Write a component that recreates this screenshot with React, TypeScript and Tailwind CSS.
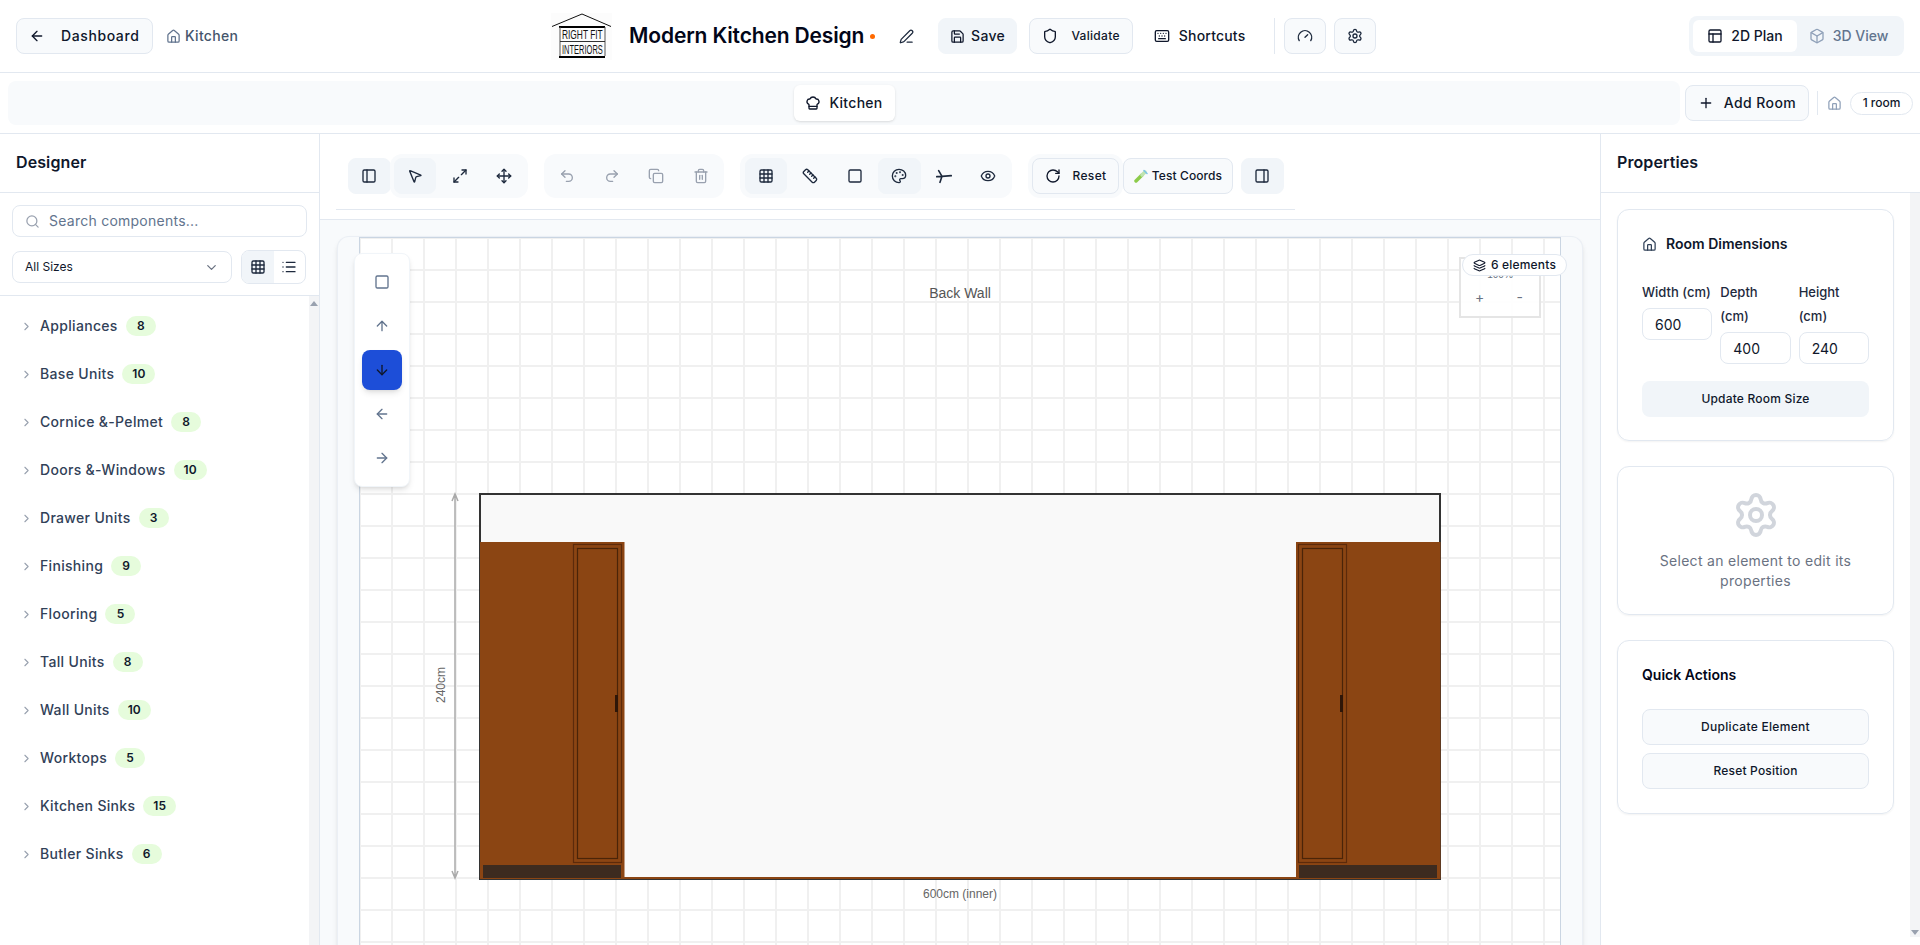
import React from 'react';
import {
  ArrowDown, ArrowLeft, ArrowRight, ArrowUp, Box, ChefHat, ChevronDown, ChevronRight, Copy, Eye, Gauge,
  Grid3x3, House, Keyboard, Layers, List, Maximize2, MousePointer2, Move, PanelLeft, PanelRight, PanelsTopLeft,
  Palette, PenLine, Plus, Redo2, RotateCw, Ruler, Save, Search, Settings, Shield, Square, Trash2, Undo2,
} from 'lucide-react';

const categories = [
  ['Appliances', 8], ['Base Units', 10], ['Cornice &-Pelmet', 8], ['Doors &-Windows', 10], ['Drawer Units', 3],
  ['Finishing', 9], ['Flooring', 5], ['Tall Units', 8], ['Wall Units', 10], ['Worktops', 5], ['Kitchen Sinks', 15], ['Butler Sinks', 6],
];

function Logo() {
  return (
    <svg width="61" height="47" viewBox="0 0 61 47" className="shrink-0">
      <rect width="61" height="47" fill="#fcfcfc" />
      <path d="M1 13.5 31 1 60 13.5" fill="none" stroke="#111" strokeWidth="1" />
      <path d="M8 14h46M8 44h46" stroke="#000" strokeWidth="2" />
      <path d="M9 14v29M54 14v29" stroke="#555" strokeWidth="1" />
      <path d="M9 28.5h45" stroke="#333" strokeWidth="1" />
      <text transform="translate(11 26) scale(0.67 1)" fontFamily="Liberation Sans, sans-serif" fontSize="12.5" fill="#111">RIGHT FIT</text>
      <text transform="translate(11 40.5) scale(0.6 1)" fontFamily="Liberation Sans, sans-serif" fontSize="12.5" fill="#111">INTERIORS</text>
    </svg>
  );
}

function JunctionIcon() {
  return (
    <svg width="16" height="16" viewBox="0 0 24 24" fill="none" stroke="currentColor" strokeWidth="2.4" strokeLinecap="round">
      <path d="M1 13 9 12.5 23 11.5M4 4l5 8.5-3 9" />
    </svg>
  );
}

function TubeIcon() {
  return (
    <svg width="14" height="14" viewBox="0 0 14 14" fill="none" strokeLinecap="round">
      <path d="M2 12 8 6" stroke="#8ccb4a" strokeWidth="3.5" />
      <path d="M8 6l3-3" stroke="#bfe3b0" strokeWidth="3.5" />
      <path d="M10 1.5 13 4.5" stroke="#7cc4e8" strokeWidth="1.5" />
    </svg>
  );
}

function ToolBtn({ active, faded, children }: { active?: boolean; faded?: boolean; children: React.ReactNode }) {
  return (
    <button className={`flex h-[36px] w-[42.5px] items-center justify-center rounded-lg border ${active ? 'border-slate-100 bg-slate-100' : 'border-transparent'} ${faded ? 'text-gray-400' : 'text-slate-800'}`}>
      {children}
    </button>
  );
}

function Gutter({ up, down, className }: { up?: boolean; down?: boolean; className?: string }) {
  return (
    <div className={`flex w-[10px] shrink-0 flex-col justify-between bg-[#f3f4f6] ${className ?? ''}`}>
      <div className="flex h-[10px] items-center justify-center pt-1">
        {up && <div className="h-0 w-0 border-x-[4px] border-b-[5px] border-x-transparent border-b-gray-400" />}
      </div>
      <div className="flex h-[10px] items-center justify-center">
        {down && <div className="h-0 w-0 border-x-[4px] border-t-[5px] border-x-transparent border-t-gray-400" />}
      </div>
    </div>
  );
}

function Header() {
  return (
    <header className="flex h-[73px] shrink-0 items-center justify-between border-b border-slate-200 px-4">
      <div className="flex items-center">
        <button className="flex h-[36px] w-[137px] items-center gap-4 rounded-lg border border-slate-200 bg-slate-50 pl-[12px] text-sm font-medium tracking-[0.6px] text-slate-900">
          <ArrowLeft size={16} />
          Dashboard
        </button>
        <div className="ml-[13px] flex items-center gap-1 text-sm font-medium tracking-[0.3px] text-slate-600">
          <House size={15} className="text-slate-500" />
          Kitchen
        </div>
      </div>

      <div className="flex items-center">
        <Logo />
        <h1 className="ml-[17px] w-[235px] whitespace-nowrap text-[21px] font-semibold tracking-[-0.15px] text-slate-950">Modern Kitchen Design</h1>
        <span className="ml-[6px] h-[5px] w-[5px] rounded-full bg-orange-500" />
        <PenLine size={15} className="ml-[24px] text-slate-800" />
        <button className="ml-[24px] flex h-[36px] w-[79px] items-center justify-center gap-[6px] rounded-lg border border-slate-100 bg-slate-100 text-sm font-medium tracking-[0.3px] text-slate-900">
          <Save size={15} />
          Save
        </button>
        <button className="ml-[12px] flex h-[36px] w-[104px] items-center justify-center gap-[13px] rounded-lg border border-slate-200 bg-slate-50 text-xs font-medium tracking-[0.3px] text-slate-900">
          <Shield size={16} />
          Validate
        </button>
        <button className="ml-[9px] flex h-[36px] w-[115px] items-center justify-center gap-[9px] text-sm font-medium tracking-[0.2px] text-slate-900">
          <Keyboard size={16} />
          Shortcuts
        </button>
        <div className="ml-[17px] h-[36px] w-px bg-slate-200" />
        <button className="ml-[9px] flex h-[36px] w-[42px] items-center justify-center rounded-lg border border-slate-200 bg-slate-50 text-slate-800">
          <Gauge size={16} />
        </button>
        <button className="ml-[8px] flex h-[36px] w-[42px] items-center justify-center rounded-lg border border-slate-200 bg-slate-50 text-slate-800">
          <Settings size={16} />
        </button>
      </div>

      <div className="flex h-[40px] w-[215px] items-center rounded-lg bg-slate-100 p-1">
        <button className="flex h-[32px] w-[104px] items-center justify-center gap-2 rounded-md bg-white text-sm font-medium text-slate-900">
          <PanelsTopLeft size={16} />
          2D Plan
        </button>
        <button className="flex h-[32px] flex-1 items-center justify-center gap-2 text-sm font-medium text-slate-500">
          <Box size={16} className="text-slate-400" />
          3D View
        </button>
      </div>
    </header>
  );
}

function RoomBar() {
  return (
    <div className="flex h-[61px] shrink-0 items-center border-b border-slate-200 pl-2">
      <div className="flex h-[44px] w-[1672px] items-center justify-center rounded-lg bg-slate-50">
        <div className="flex h-[36px] w-[101px] items-center justify-center gap-2 rounded-md bg-white text-sm font-medium tracking-[0.3px] text-slate-900 shadow-sm">
          <ChefHat size={16} />
          Kitchen
        </div>
      </div>
      <button className="ml-[5px] flex h-[36px] w-[124px] items-center justify-center gap-[10px] rounded-lg border border-slate-200 bg-slate-50 text-sm font-medium tracking-[0.4px] text-slate-900">
        <Plus size={16} />
        Add Room
      </button>
      <div className="ml-2 h-[24px] w-px bg-slate-200" />
      <House size={15} className="ml-[9px] text-slate-400" />
      <div className="ml-[8px] flex h-[23px] w-[63px] items-center justify-center rounded-full border border-slate-200 bg-white text-xs font-medium text-slate-900">1 room</div>
    </div>
  );
}

function LeftPanel() {
  return (
    <aside className="flex w-[320px] shrink-0 flex-col border-r border-slate-200">
      <div className="flex h-[59px] shrink-0 items-center border-b border-slate-200 pb-[3px] pl-4 text-base font-semibold tracking-[0.1px] text-slate-900">Designer</div>
      <div className="flex h-[103px] shrink-0 flex-col gap-[13px] border-b border-slate-200 px-3 pt-[12px]">
        <div className="flex h-[32px] items-center gap-[9px] rounded-lg border border-slate-200 pl-3 text-sm tracking-[0.25px] text-slate-500">
          <Search size={15} className="text-gray-400" />
          Search components...
        </div>
        <div className="flex items-center gap-[9px]">
          <div className="flex h-[32px] w-[220px] items-center justify-between rounded-lg border border-slate-200 px-3 text-xs text-slate-900">
            All Sizes
            <ChevronDown size={15} className="text-gray-500" />
          </div>
          <div className="flex h-[34px] w-[65px] overflow-hidden rounded-lg border border-slate-200">
            <div className="flex flex-1 items-center justify-center bg-slate-100 text-slate-800"><Grid3x3 size={16} /></div>
            <div className="flex flex-1 items-center justify-center text-slate-800"><List size={16} /></div>
          </div>
        </div>
      </div>
      <div className="flex min-h-0 flex-1">
        <div className="flex-1 pt-[6px]">
          {categories.map(([name, count]) => (
            <div key={name} className="flex h-[48px] items-center pl-[20px]">
              <ChevronRight size={13} className="text-gray-400" />
              <span className="ml-[7px] whitespace-nowrap text-sm font-medium tracking-[0.32px] text-slate-700">{name}</span>
              <span className="ml-[8px] flex h-[20px] min-w-[30px] items-center justify-center rounded-full bg-[#e6fcdc] px-[10px] text-xs font-semibold text-slate-900">{count}</span>
            </div>
          ))}
        </div>
        <Gutter up />
      </div>
    </aside>
  );
}

function Toolbar() {
  return (
    <div className="h-[86px] shrink-0 border-b border-slate-200 bg-white pl-4 pt-[9px]">
      <div className="flex h-[67px] w-[959px] items-center border-b border-slate-200 pl-3">
        <ToolBtn active><PanelLeft size={16} /></ToolBtn>
        <div className="-ml-[0.5px] flex h-[44px] w-[138px] items-center justify-center gap-[2px] rounded-xl bg-slate-50 pl-[1px]">
          <ToolBtn active><MousePointer2 size={16} /></ToolBtn>
          <ToolBtn><Maximize2 size={16} /></ToolBtn>
          <ToolBtn><Move size={16} /></ToolBtn>
        </div>
        <div className="ml-4 flex h-[44px] w-[180px] items-center justify-center gap-[2px] rounded-xl bg-slate-50">
          <ToolBtn faded><Undo2 size={16} /></ToolBtn>
          <ToolBtn faded><Redo2 size={16} /></ToolBtn>
          <ToolBtn faded><Copy size={16} /></ToolBtn>
          <ToolBtn faded><Trash2 size={16} /></ToolBtn>
        </div>
        <div className="ml-4 flex h-[44px] w-[272px] items-center justify-center gap-[2px] rounded-xl bg-slate-50 pl-[2px]">
          <ToolBtn active><Grid3x3 size={16} /></ToolBtn>
          <ToolBtn><Ruler size={16} /></ToolBtn>
          <ToolBtn><Square size={16} /></ToolBtn>
          <ToolBtn active><Palette size={16} /></ToolBtn>
          <ToolBtn><JunctionIcon /></ToolBtn>
          <ToolBtn><Eye size={16} /></ToolBtn>
        </div>
        <div className="ml-4 flex h-[44px] w-[95px] items-center justify-center rounded-xl bg-slate-50">
          <button className="flex h-[36px] w-[87px] items-center justify-center gap-[12px] rounded-lg border border-slate-200 bg-slate-50 text-xs font-medium tracking-[0.3px] text-slate-900">
            <RotateCw size={16} />
            Reset
          </button>
        </div>
        <button className="flex h-[36px] w-[110px] items-center justify-center gap-1 rounded-lg border border-slate-200 bg-slate-50 text-xs font-medium tracking-[0.1px] text-slate-900">
          <TubeIcon />
          Test Coords
        </button>
        <div className="ml-2"><ToolBtn active><PanelRight size={16} /></ToolBtn></div>
      </div>
    </div>
  );
}

function Cabinet({ mirror }: { mirror?: boolean }) {
  const left = mirror ? 1296 : 480;
  const doorX = mirror ? 1298 : 573;
  const innerX = mirror ? 1302 : 577;
  const handleX = mirror ? 1340 : 615;
  const plinthX = mirror ? 1299 : 483;
  return (
    <g>
      <rect x={left} y="542" width="144.5" height="337" fill="#8b4513" />
      <rect x={doorX + 0.5} y="544.5" width="48" height="318" fill="none" stroke="#5c2a0a" strokeWidth="1.2" />
      <rect x={innerX + 0.5} y="548.5" width="40" height="310" fill="none" stroke="#4a2408" strokeWidth="1.2" />
      <rect x={handleX} y="695" width="3" height="17" fill="#2e1608" />
      <rect x={plinthX} y="865" width="138" height="13" fill="#3d2b1f" />
    </g>
  );
}

function RoomDrawing() {
  return (
    <svg width="1200" height="707" viewBox="360 238 1200 707" className="absolute left-0 top-0">
      <rect x="480" y="494" width="960" height="385" fill="#f9f9f9" stroke="#333" strokeWidth="2" />
      <Cabinet />
      <Cabinet mirror />
      <rect x="624" y="877" width="672" height="2" fill="#8b4513" />
      <path d="M455 494v384M452 501l3-7 3 7M452 871l3 7 3-7" fill="none" stroke="#aaa" strokeWidth="1.5" />
      <text x="445" y="685" transform="rotate(-90 445 685)" textAnchor="middle" fontFamily="Liberation Sans, sans-serif" fontSize="12" fill="#666">240cm</text>
      <text x="960" y="898" textAnchor="middle" fontFamily="Liberation Sans, sans-serif" fontSize="12" fill="#666">600cm (inner)</text>
      <text x="960" y="298" textAnchor="middle" fontFamily="Liberation Sans, sans-serif" fontSize="14" fill="#555">Back Wall</text>
    </svg>
  );
}

function Canvas() {
  return (
    <div className="min-h-0 flex-1 overflow-hidden bg-slate-50 px-[17px] pt-4">
      <div className="relative h-[800px] rounded-t-xl border border-slate-200/60 bg-[#f8fafc] px-[21px] shadow-md">
        <div className="relative h-full border-x border-t border-slate-300 bg-white bg-[linear-gradient(to_right,#f0f0f0_2px,transparent_2px),linear-gradient(to_bottom,#f0f0f0_2px,transparent_2px)] bg-[size:32px_32px] bg-[position:-1px_-1px]">
          <RoomDrawing />
        </div>

        <div className="absolute left-[16px] top-[16px] flex h-[234px] w-[56px] flex-col items-center gap-[4.4px] rounded-lg border border-slate-100 bg-white py-[8px] text-slate-500 shadow-md">
          <div className="flex h-[40px] w-[40px] items-center justify-center"><Square size={16} /></div>
          <div className="flex h-[40px] w-[40px] items-center justify-center"><ArrowUp size={16} /></div>
          <div className="flex h-[40px] w-[40px] items-center justify-center rounded-lg bg-[#1d4ed8] text-slate-900 shadow-md"><ArrowDown size={16} /></div>
          <div className="flex h-[40px] w-[40px] items-center justify-center"><ArrowLeft size={16} /></div>
          <div className="flex h-[40px] w-[40px] items-center justify-center"><ArrowRight size={16} /></div>
        </div>

        <div className="absolute right-[41px] top-[20px] h-[61px] w-[82px] border-2 border-[#e5e5e5] bg-white/90">
          <div className="pt-[8px] text-center font-['Liberation_Sans',sans-serif] text-[10px] text-gray-500">100%</div>
          <div className="mt-[5px] flex justify-between pl-[14px] pr-[16px] text-sm leading-5 text-gray-500">
            <span>+</span>
            <span>-</span>
          </div>
        </div>

        <div className="absolute right-[15px] top-[17px] flex h-[22px] w-[105px] items-center justify-center gap-[5px] rounded-full border border-slate-200 bg-white text-xs font-medium tracking-[0.2px] text-slate-900">
          <Layers size={13} />
          6 elements
        </div>
      </div>
    </div>
  );
}

function RightPanel() {
  return (
    <aside className="flex w-[320px] shrink-0 flex-col border-l border-slate-200 bg-white">
      <div className="flex h-[59px] shrink-0 items-center border-b border-slate-200 pb-[3px] pl-4 text-base font-semibold tracking-[0.1px] text-slate-900">Properties</div>
      <div className="flex min-h-0 flex-1 items-stretch pb-2">
        <div className="flex flex-1 flex-col gap-[25px] pl-4 pr-[16px] pt-4">
          <section className="rounded-xl border border-slate-200 px-6 pb-[23px] pt-6 shadow-xs">
            <div className="flex h-5 items-center gap-[9px] text-sm font-semibold text-slate-900">
              <House size={15} className="text-slate-700" />
              Room Dimensions
            </div>
            <div className="mt-[26px] grid grid-cols-3 items-start gap-2 text-[13px] font-medium leading-6 text-slate-800">
              <label className="block whitespace-nowrap">
                <span className="mb-[4px] block">Width (cm)</span>
                <input readOnly value="600" className="h-[32px] w-full rounded-lg border border-slate-200 pl-3 text-sm font-normal text-slate-900" />
              </label>
              <label className="block">
                <span className="mb-[4px] block">Depth<br />(cm)</span>
                <input readOnly value="400" className="h-[32px] w-full rounded-lg border border-slate-200 pl-3 text-sm font-normal text-slate-900" />
              </label>
              <label className="block">
                <span className="mb-[4px] block">Height<br />(cm)</span>
                <input readOnly value="240" className="h-[32px] w-full rounded-lg border border-slate-200 pl-3 text-sm font-normal text-slate-900" />
              </label>
            </div>
            <button className="mt-[17px] h-[36px] w-full rounded-lg bg-slate-100 text-xs font-medium tracking-[0.2px] text-slate-900">Update Room Size</button>
          </section>

          <section className="flex flex-col items-center rounded-xl border border-slate-200 px-6 pb-[23px] pt-6 text-center shadow-xs">
            <Settings size={48} strokeWidth={2} className="text-gray-300" />
            <p className="mt-3 text-sm leading-5 tracking-[0.3px] text-gray-500">Select an element to edit its properties</p>
          </section>

          <section className="rounded-xl border border-slate-200 p-6 shadow-xs">
            <h3 className="h-5 text-sm font-semibold leading-5 text-slate-950">Quick Actions</h3>
            <button className="mt-6 h-[36px] w-full rounded-lg border border-slate-200 bg-slate-50 text-xs font-medium tracking-[0.3px] text-slate-900">Duplicate Element</button>
            <button className="mt-2 h-[36px] w-full rounded-lg border border-slate-200 bg-slate-50 text-xs font-medium tracking-[0.2px] text-slate-900">Reset Position</button>
          </section>
        </div>
        <Gutter down />
      </div>
    </aside>
  );
}

export default function App() {
  return (
    <div className="flex h-screen flex-col overflow-hidden bg-white font-['Inter',sans-serif]">
      <Header />
      <RoomBar />
      <div className="flex min-h-0 flex-1">
        <LeftPanel />
        <main className="flex min-w-0 flex-1 flex-col">
          <Toolbar />
          <Canvas />
        </main>
        <RightPanel />
      </div>
    </div>
  );
}
